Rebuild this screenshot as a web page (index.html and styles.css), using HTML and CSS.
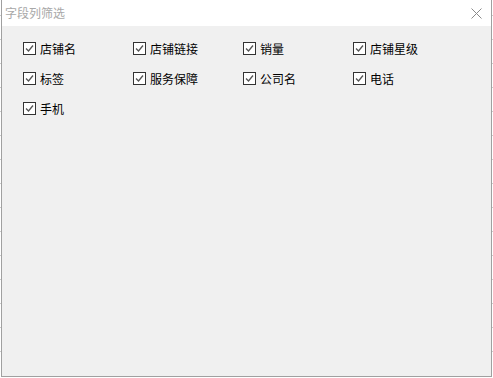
FILE: index.html
```html
<!DOCTYPE html>
<html lang="zh-CN">
<head>
  <meta charset="UTF-8" />
  <title>字段列筛选</title>
  <link rel="stylesheet" href="styles.css">
</head>
<body>
  <!-- page behind the dialog, only its edges show -->
  <div class="sheet">
    <div class="sheet-row"><i class="link"></i><i></i><i></i><i></i><i></i><i></i><i></i></div>
    <div class="sheet-row"><i class="link"></i><i></i><i></i><i></i><i></i><i></i><i></i></div>
    <div class="sheet-row"><i class="link"></i><i></i><i></i><i></i><i></i><i></i><i></i></div>
    <div class="sheet-row"><i class="link"></i><i></i><i></i><i></i><i></i><i></i><i></i></div>
    <div class="sheet-row"><i class="link"></i><i></i><i></i><i></i><i></i><i></i><i></i></div>
    <div class="sheet-row"><i class="link"></i><i></i><i></i><i></i><i></i><i></i><i></i></div>
    <div class="sheet-row"><i class="link"></i><i></i><i></i><i></i><i></i><i></i><i></i></div>
    <div class="sheet-row"><i class="link"></i><i></i><i></i><i></i><i></i><i></i><i></i></div>
    <div class="sheet-row"><i class="link"></i><i></i><i></i><i></i><i></i><i></i><i></i></div>
    <div class="sheet-row"><i class="link"></i><i></i><i></i><i></i><i></i><i></i><i></i></div>
    <div class="sheet-row"><i class="link"></i><i></i><i></i><i></i><i></i><i></i><i></i></div>
    <div class="sheet-row"><i class="link"></i><i></i><i></i><i></i><i></i><i></i><i></i></div>
    <div class="sheet-row"><i class="link"></i><i></i><i></i><i></i><i></i><i></i><i></i></div>
    <div class="sheet-row"><i class="link"></i><i></i><i></i><i></i><i></i><i></i><i></i></div>
    <div class="sheet-row"><i class="link"></i><i></i><i></i><i></i><i></i><i></i><i></i></div>
    <div class="sheet-row"><i class="link"></i><i></i><i></i><i></i><i></i><i></i><i></i></div>
    <div class="sheet-row"><i class="link"></i><i></i><i></i><i></i><i></i><i></i><i></i></div>
  </div>

  <div class="dialog">
    <div class="dialog-title">
      <span>字段列筛选</span>
      <svg class="close" width="11" height="11" viewBox="0 0 11 11">
        <path d="M0.5 0.5 L10.5 10.5 M10.5 0.5 L0.5 10.5" stroke="#8a8a8a" stroke-width="1" fill="none" />
      </svg>
    </div>
    <div class="dialog-body">
      <label class="field"><svg class="box" width="13" height="13" viewBox="0 0 13 13"><rect x="0.5" y="0.5" width="12" height="12" fill="#fff" stroke="#333" /><path d="M3 6.5 L5.5 9 L10 3.5" stroke="#555" stroke-width="1.3" fill="none" /></svg>店铺名</label>
      <label class="field"><svg class="box" width="13" height="13" viewBox="0 0 13 13"><rect x="0.5" y="0.5" width="12" height="12" fill="#fff" stroke="#333" /><path d="M3 6.5 L5.5 9 L10 3.5" stroke="#555" stroke-width="1.3" fill="none" /></svg>店铺链接</label>
      <label class="field"><svg class="box" width="13" height="13" viewBox="0 0 13 13"><rect x="0.5" y="0.5" width="12" height="12" fill="#fff" stroke="#333" /><path d="M3 6.5 L5.5 9 L10 3.5" stroke="#555" stroke-width="1.3" fill="none" /></svg>销量</label>
      <label class="field"><svg class="box" width="13" height="13" viewBox="0 0 13 13"><rect x="0.5" y="0.5" width="12" height="12" fill="#fff" stroke="#333" /><path d="M3 6.5 L5.5 9 L10 3.5" stroke="#555" stroke-width="1.3" fill="none" /></svg>店铺星级</label>
      <label class="field"><svg class="box" width="13" height="13" viewBox="0 0 13 13"><rect x="0.5" y="0.5" width="12" height="12" fill="#fff" stroke="#333" /><path d="M3 6.5 L5.5 9 L10 3.5" stroke="#555" stroke-width="1.3" fill="none" /></svg>标签</label>
      <label class="field"><svg class="box" width="13" height="13" viewBox="0 0 13 13"><rect x="0.5" y="0.5" width="12" height="12" fill="#fff" stroke="#333" /><path d="M3 6.5 L5.5 9 L10 3.5" stroke="#555" stroke-width="1.3" fill="none" /></svg>服务保障</label>
      <label class="field"><svg class="box" width="13" height="13" viewBox="0 0 13 13"><rect x="0.5" y="0.5" width="12" height="12" fill="#fff" stroke="#333" /><path d="M3 6.5 L5.5 9 L10 3.5" stroke="#555" stroke-width="1.3" fill="none" /></svg>公司名</label>
      <label class="field"><svg class="box" width="13" height="13" viewBox="0 0 13 13"><rect x="0.5" y="0.5" width="12" height="12" fill="#fff" stroke="#333" /><path d="M3 6.5 L5.5 9 L10 3.5" stroke="#555" stroke-width="1.3" fill="none" /></svg>电话</label>
      <label class="field"><svg class="box" width="13" height="13" viewBox="0 0 13 13"><rect x="0.5" y="0.5" width="12" height="12" fill="#fff" stroke="#333" /><path d="M3 6.5 L5.5 9 L10 3.5" stroke="#555" stroke-width="1.3" fill="none" /></svg>手机</label>
    </div>
  </div>
</body>
</html>
```

FILE: styles.css
```css
body {
  margin: 0;
  height: 100vh;
  background: #fff;
  font-family: "Noto Sans CJK SC", "Liberation Sans", sans-serif;
  font-size: 12px;
  color: #000;
  overflow: hidden;
}

/* table behind the dialog */
.sheet {
  display: flex;
  flex-direction: column;
  height: 100%;
  overflow: hidden;
  margin-left: -30px;
  margin-top: -8px;
}
.sheet-row {
  flex: none;
  display: grid;
  grid-template-columns: 80px 75px 75px 75px 75px 75px 75px;
  height: 23px;
  border-bottom: 1px solid #ccc;
}
.sheet-row i {
  border-left: 1px solid #aaa;
}
.sheet-row .link {
  border-left: none;
  border-right: 1px solid #aaa;
  background: linear-gradient(#00f, #00f) right 1px top 13px / 3px 1px no-repeat,
              linear-gradient(#00f, #00f) right 1px top 16px / 3px 1px no-repeat;
}

/* dialog */
.dialog {
  position: absolute;
  left: 1px;
  top: -1px;
  width: 489px;
  height: 376px;
  border: 1px solid #a0a0a0;
  background: #f0f0f0;
  display: flex;
  flex-direction: column;
}

.dialog-title {
  height: 26px;
  background: #fff;
  display: flex;
  align-items: center;
  justify-content: space-between;
  padding: 0 9px 0 3px;
  color: #a8a8a8;
  font-size: 12px;
}
.dialog-title span {
  margin-top: -1px;
}
.close {
  display: block;
}

.dialog-body {
  display: grid;
  grid-template-columns: repeat(4, 110px);
  grid-auto-rows: 30px;
  padding: 7px 0 0 21px;
}

.field {
  display: flex;
  align-items: center;
  gap: 4px;
  height: 12px;
  margin-top: 9px;
  white-space: nowrap;
}
.box {
  display: block;
  flex: none;
}
```
